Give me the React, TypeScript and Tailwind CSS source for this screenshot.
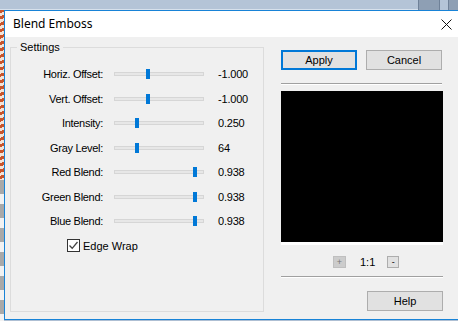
import React from "react";

type SliderRow = { label: string; pos: number; value: string };

const rows: SliderRow[] = [
  { label: "Horiz. Offset:", pos: 32, value: "-1.000" },
  { label: "Vert. Offset:", pos: 32, value: "-1.000" },
  { label: "Intensity:", pos: 21, value: "0.250" },
  { label: "Gray Level:", pos: 21, value: "64" },
  { label: "Red Blend:", pos: 79, value: "0.938" },
  { label: "Green Blend:", pos: 79, value: "0.938" },
  { label: "Blue Blend:", pos: 79, value: "0.938" },
];

const Slider: React.FC<{ pos: number }> = ({ pos }) => (
  <div className="relative w-[90px] h-[12px] flex items-center">
    <div className="w-full h-[4px] bg-[#e7e7e7] border border-[#d6d6d6]" />
    <div
      className="absolute top-[1px] w-[4px] h-[10px] bg-[#0078d7]"
      style={{ left: pos }}
    />
  </div>
);

const App: React.FC = () => {
  return (
    <div
      className="w-[458px] h-[321px] overflow-hidden flex flex-col bg-[#aebfd3] text-[11px] text-black"
      style={{ fontFamily: '"Liberation Sans", Arial, sans-serif' }}
    >
      {/* desktop strip behind the dialog */}
      <div className="h-[10px] flex shrink-0">
        <div className="flex-1 bg-[#b4c4d7] border-b border-[#d7e1ec]" />
        <div className="w-[22px] bg-[#8e9fb4] border-x border-[#6f8198]" />
        <div className="w-[8px] bg-[#b4c4d7]" />
        <div className="w-[10px] bg-[#8e9fb4] border-l border-[#6f8198]" />
      </div>

      <div className="flex flex-1">
        <div className="w-[4px] flex flex-col shrink-0">
          <div className="h-[170px] bg-[repeating-linear-gradient(160deg,#c9542b_0px,#c9542b_3px,#f3e3d8_3px,#f3e3d8_6px)]" />
          <div className="flex-1 bg-[repeating-linear-gradient(180deg,#a9a9a9_0px,#a9a9a9_14px,#f2f2f2_14px,#f2f2f2_24px)]" />
        </div>

        {/* dialog */}
        <div className="flex-1 h-[310px] flex flex-col border-l border-t border-b border-[#1883d7]">
          <div className="h-[26px] bg-white flex items-center justify-between pl-[8px] pr-[6px] shrink-0">
            <span
              className="text-[12px] text-black"
              style={{ fontFamily: '"Noto Sans", "Liberation Sans", sans-serif' }}
            >
              Blend Emboss
            </span>
            <svg width="11" height="11" viewBox="0 0 11 11">
              <path d="M0.5 0.5 L10.5 10.5 M10.5 0.5 L0.5 10.5" stroke="#111" strokeWidth="1" />
            </svg>
          </div>

          <div className="flex-1 bg-[#f0f0f0] flex pl-[5px]">
            {/* settings group */}
            <fieldset className="w-[254px] h-[272px] mt-[3px] border border-[#dcdcdc] px-0 pb-0">
              <legend className="ml-[6px] px-[3px] leading-[14px]">Settings</legend>
              <div className="pt-[8px] flex flex-col">
                {rows.map((r) => (
                  <div key={r.label} className="h-[24.5px] flex items-center">
                    <span className="w-[92px] text-right tracking-[-0.3px]">{r.label}</span>
                    <div className="ml-[11px]">
                      <Slider pos={r.pos} />
                    </div>
                    <span className="ml-[14px] tracking-[-0.2px]">{r.value}</span>
                  </div>
                ))}
                <div className="h-[24.5px] flex items-center pl-[56px]">
                  <div className="w-[13px] h-[13px] bg-white border border-[#333] flex items-center justify-center">
                    <svg width="11" height="11" viewBox="0 0 11 11">
                      <path d="M1.5 5.5 L4.2 8.3 L9.5 2" stroke="#444" strokeWidth="1.3" fill="none" />
                    </svg>
                  </div>
                  <span className="ml-[3px]">Edge Wrap</span>
                </div>
              </div>
            </fieldset>

            {/* right column */}
            <div className="ml-[17px] w-[162px] flex flex-col pt-[13px]">
              <div className="flex gap-[9px]">
                <button className="w-[76px] h-[20px] bg-[#e1e1e1] border-2 border-[#0078d7] flex items-center justify-center">
                  Apply
                </button>
                <button className="w-[76px] h-[20px] bg-[#e1e1e1] border border-[#adadad] flex items-center justify-center">
                  Cancel
                </button>
              </div>
              <div className="mt-[13px] w-[161px] border-t border-[#a0a0a0] border-b border-b-white" />
              <div className="mt-[6px] h-[151px] bg-black" />
              <div className="h-[3px] bg-white" />
              <div className="mt-[11px] h-[12px] flex items-center">
                <div className="ml-[52px] w-[13px] h-[12px] bg-[#cccccc] border border-[#bfbfbf] flex items-center justify-center text-[9px] text-[#777] leading-none">
                  +
                </div>
                <span className="ml-[14px]">1:1</span>
                <div className="ml-[12px] w-[12px] h-[12px] bg-[#e1e1e1] border border-[#adadad] flex items-center justify-center text-[9px] leading-none">
                  -
                </div>
              </div>
              <div className="mt-[8px] w-[162px] border-t border-[#a0a0a0] border-b border-b-white" />
              <div className="mt-[13px] flex justify-end">
                <button className="w-[76px] h-[20px] bg-[#e1e1e1] border border-[#adadad] flex items-center justify-center">
                  Help
                </button>
              </div>
            </div>
          </div>
        </div>
      </div>
    </div>
  );
};

export default App;
